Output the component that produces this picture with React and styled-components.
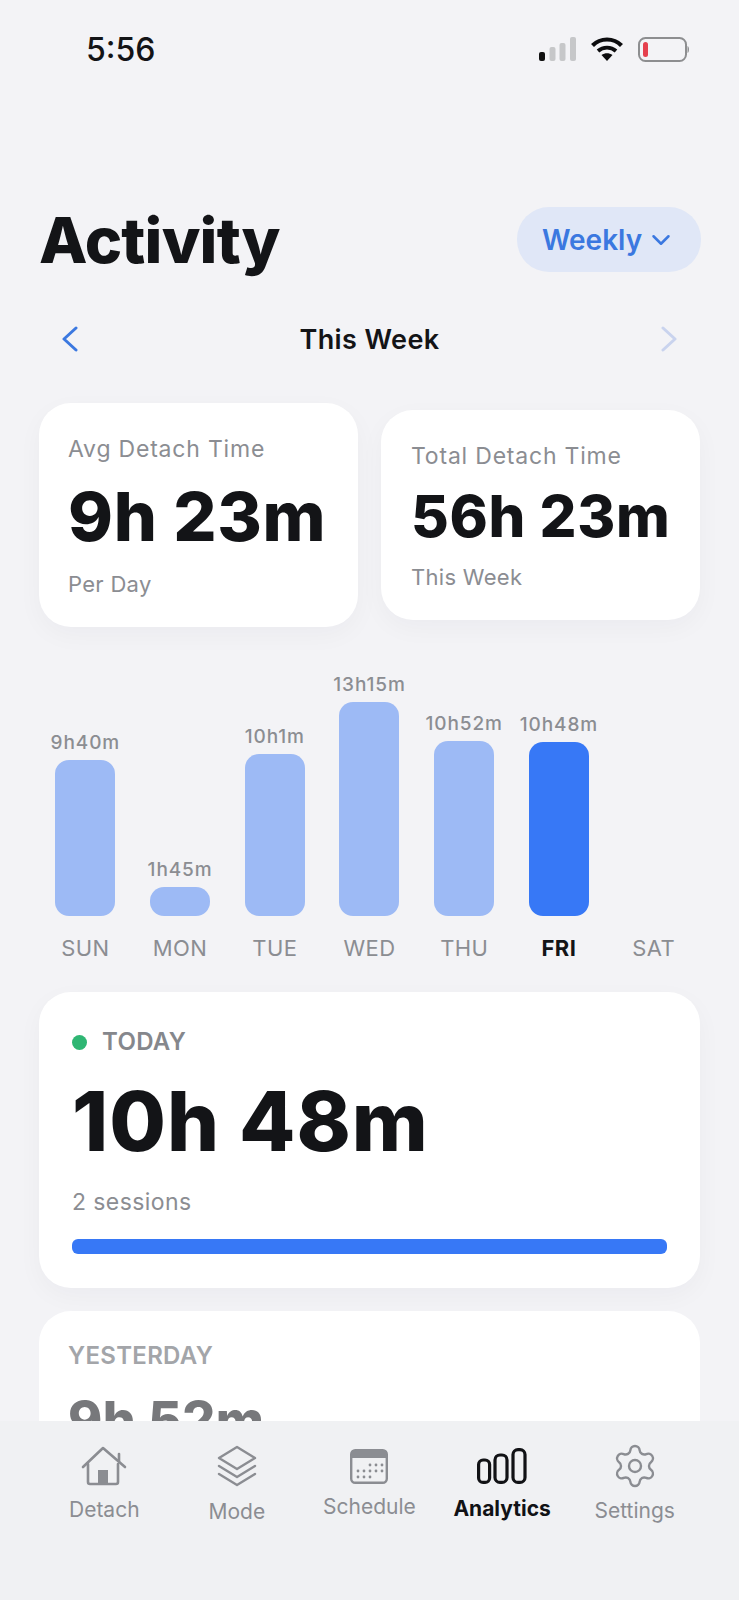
import React from "react";
import styled, { createGlobalStyle } from "styled-components";
import { ChevronDown, Settings } from "lucide-react";

const GlobalStyle = createGlobalStyle`
  * { box-sizing: border-box; }
  html, body { margin: 0; padding: 0; background: #f3f3f6; }
  body { font-family: Inter, "Noto Sans", "Liberation Sans", sans-serif; }
`;

const days = [
  { day: "SUN", label: "9h40m", height: 156 },
  { day: "MON", label: "1h45m", height: 29 },
  { day: "TUE", label: "10h1m", height: 162 },
  { day: "WED", label: "13h15m", height: 214 },
  { day: "THU", label: "10h52m", height: 175 },
  { day: "FRI", label: "10h48m", height: 174, active: true },
  { day: "SAT" },
];

const HomeIcon = () => (
  <svg width="46" height="40" viewBox="0 0 46 40" fill="none" stroke="#8b8d92" strokeWidth="2.6" strokeLinecap="round" strokeLinejoin="round">
    <path d="M2 21 L22 2 L44 21" />
    <path d="M38 15 V8" />
    <path d="M7 18 V36 a2 2 0 0 0 2 2 H35 a2 2 0 0 0 2 -2 V18" />
    <rect x="17" y="24" width="10" height="14" fill="#8b8d92" stroke="none" />
  </svg>
);

const LayersIcon = () => (
  <svg width="40" height="42" viewBox="0 0 40 42" fill="none" stroke="#8b8d92" strokeWidth="2.4" strokeLinejoin="round" strokeLinecap="round">
    <path d="M20 2 L38 13 L20 24 L2 13 Z" />
    <path d="M2 21 L20 32 L38 21" />
    <path d="M2 29 L20 40 L38 29" />
  </svg>
);

const CalendarIcon = () => {
  const dots = [];
  [16, 22, 28].forEach((y, row) => {
    [8, 14, 20, 26, 32].forEach((x, col) => {
      if ((row === 0 && col < 2) || (row === 2 && col > 2)) return;
      dots.push(<circle key={`${x}-${y}`} cx={x} cy={y} r="1.4" fill="#8b8d92" />);
    });
  });
  return (
    <svg width="38" height="35" viewBox="0 0 38 35" fill="none">
      <rect x="1.2" y="1.2" width="35.6" height="32.6" rx="4" stroke="#8b8d92" strokeWidth="2.4" />
      <path d="M1 5 a4 4 0 0 1 4 -4 H33 a4 4 0 0 1 4 4 V9 H1 Z" fill="#8b8d92" />
      {dots}
    </svg>
  );
};

const BarsIcon = () => (
  <svg width="50" height="36" viewBox="0 0 50 36" fill="none" stroke="#111215" strokeWidth="3.2">
    <rect x="1.6" y="12" width="11" height="22.4" rx="4.5" />
    <rect x="18" y="7" width="12" height="27.4" rx="5" />
    <rect x="36" y="1.6" width="12" height="32.8" rx="5" />
  </svg>
);

const NavChevron = ({ flip, color }) => (
  <svg width="18" height="26" viewBox="0 0 18 26" fill="none" stroke={color} strokeWidth="3" strokeLinecap="round" strokeLinejoin="round">
    <path d={flip ? "M3 2 L15 13 L3 24" : "M15 2 L3 13 L15 24"} />
  </svg>
);

const tabs = [
  { name: "Detach", icon: <HomeIcon />, gap: 11 },
  { name: "Mode", icon: <LayersIcon />, gap: 13 },
  { name: "Schedule", icon: <CalendarIcon />, gap: 8 },
  { name: "Analytics", icon: <BarsIcon />, gap: 10, active: true },
  { name: "Settings", icon: <Settings size={48} strokeWidth={1.2} color="#8b8d92" />, gap: 12 },
];

const StatusIcons = () => (
  <StatusGroup>
    <svg width="37" height="24" viewBox="0 0 37 24">
      <rect x="0" y="15" width="6" height="9" rx="2" fill="#111" />
      <rect x="10.5" y="10" width="6" height="14" rx="2" fill="#c6c7c9" />
      <rect x="20.5" y="6" width="6" height="18" rx="2" fill="#c6c7c9" />
      <rect x="31" y="0" width="6" height="24" rx="2" fill="#c6c7c9" />
    </svg>
    <svg width="32" height="24" viewBox="0 0 32 24" fill="none">
      <path d="M1.5 8.5 C9.5 0.5 22.5 0.5 30.5 8.5" stroke="#0c0c0e" strokeWidth="4.2" />
      <path d="M7 14 C12 9.5 20 9.5 25 14" stroke="#0c0c0e" strokeWidth="3.8" />
      <path d="M10.5 18 L16 24 L21.5 18 C18 15.5 14 15.5 10.5 18 Z" fill="#0c0c0e" />
    </svg>
    <svg width="52" height="25" viewBox="0 0 52 25" fill="none">
      <rect x="1" y="1" width="47" height="23" rx="6.5" stroke="#8d8e90" strokeWidth="2" />
      <rect x="5" y="5" width="5" height="15" rx="2.5" fill="#e5404e" />
      <path d="M49.5 9 C51.5 9.8 51.5 15.2 49.5 16 Z" fill="#8d8e90" />
    </svg>
  </StatusGroup>
);

export default function App() {
  return (
    <Screen>
      <GlobalStyle />
      <Body>
        <StatusBar>
          <Clock>5:56</Clock>
          <StatusIcons />
        </StatusBar>

        <TitleRow>
          <Title>Activity</Title>
          <RangeButton>
            Weekly
            <ChevronDown size={30} strokeWidth={2} />
          </RangeButton>
        </TitleRow>

        <WeekNav>
          <NavChevron color="#3b78e0" />
          <WeekName>This Week</WeekName>
          <NavChevron flip color="#c9d3ee" />
        </WeekNav>

        <SummaryRow>
          <SummaryCard $pad={17} $left={29}>
            <CardLabel>Avg Detach Time</CardLabel>
            <SummaryValue $size={68}>9h 23m</SummaryValue>
            <CardNote>Per Day</CardNote>
          </SummaryCard>
          <SummaryCard $pad={16} $left={30}>
            <CardLabel>Total Detach Time</CardLabel>
            <SummaryValue $size={58}>56h 23m</SummaryValue>
            <CardNote>This Week</CardNote>
          </SummaryCard>
        </SummaryRow>

        <Chart>
          {days.map((d) => (
            <DayColumn key={d.day}>
              {d.label && <BarValue>{d.label}</BarValue>}
              {d.height && <Bar $height={d.height} $active={d.active} />}
              <DayName $active={d.active}>{d.day}</DayName>
            </DayColumn>
          ))}
        </Chart>

        <TodayCard>
          <TodayHead>
            <GreenDot />
            <SectionLabel>TODAY</SectionLabel>
          </TodayHead>
          <TodayValue>10h 48m</TodayValue>
          <Sessions>2 sessions</Sessions>
          <Progress />
        </TodayCard>

        <YesterdayCard>
          <SectionLabel $muted>YESTERDAY</SectionLabel>
          <YesterdayValue>9h 52m</YesterdayValue>
        </YesterdayCard>
      </Body>

      <TabBar>
        {tabs.map((t) => (
          <Tab key={t.name}>
            <TabIcon>{t.icon}</TabIcon>
            <TabName $gap={t.gap} $active={t.active}>{t.name}</TabName>
          </Tab>
        ))}
      </TabBar>
    </Screen>
  );
}

const Screen = styled.div`
  width: 739px;
  height: 1600px;
  display: flex;
  flex-direction: column;
  overflow: hidden;
  background: #f3f3f6;
  color: #131417;
`;

const Body = styled.main`
  flex: 1;
  min-height: 0;
  overflow: hidden;
  padding: 0 39px;
`;

const StatusBar = styled.div`
  height: 70px;
  padding: 28px 10px 0 47px;
  display: flex;
  align-items: center;
  justify-content: space-between;
`;

const StatusGroup = styled.div`
  display: flex;
  align-items: center;
  gap: 15px;
`;

const Clock = styled.span`
  font-size: 32px;
  font-weight: 500;
`;

const TitleRow = styled.header`
  margin-top: 137px;
  height: 65px;
  display: flex;
  align-items: center;
  justify-content: space-between;
`;

const Title = styled.h1`
  margin: 0;
  font-size: 63px;
  font-weight: 800;
  letter-spacing: -0.8px;
`;

const RangeButton = styled.button`
  width: 184px;
  height: 65px;
  margin-right: -1px;
  border: 0;
  border-radius: 32px;
  background: #e0e7f7;
  color: #3b78e0;
  font-family: inherit;
  font-size: 28px;
  font-weight: 600;
  display: flex;
  align-items: center;
  justify-content: center;
  gap: 4px;
`;

const WeekNav = styled.nav`
  margin-top: 47px;
  height: 40px;
  padding: 0 22px 0 22px;
  display: flex;
  align-items: center;
  justify-content: space-between;
`;

const WeekName = styled.span`
  font-size: 27px;
  font-weight: 600;
  letter-spacing: 0.4px;
`;

const SummaryRow = styled.section`
  margin-top: 44px;
  display: flex;
  align-items: center;
  gap: 23px;
`;

const SummaryCard = styled.article`
  width: 319px;
  padding: 32px 0 29px ${(p) => p.$left}px;
  background: #fff;
  border-radius: 32px;
  box-shadow: 0 8px 26px rgba(30, 40, 70, 0.035);
  display: flex;
  flex-direction: column;
  gap: ${(p) => p.$pad}px;
`;

const CardLabel = styled.div`
  font-size: 23px;
  line-height: 28px;
  letter-spacing: 0.8px;
  color: #8b8d92;
`;

const CardNote = styled.div`
  font-size: 22px;
  line-height: 28px;
  letter-spacing: 0.3px;
  color: #8b8d92;
`;

const SummaryValue = styled.div`
  font-size: ${(p) => p.$size}px;
  line-height: ${(p) => (p.$size > 60 ? 72 : 60)}px;
  font-weight: 800;
  letter-spacing: 0.7px;
  white-space: nowrap;
  margin-bottom: 1px;
`;

const Chart = styled.section`
  margin: 40px -1px 0;
  height: 298px;
  display: grid;
  grid-template-columns: repeat(7, 1fr);
`;

const DayColumn = styled.div`
  display: flex;
  flex-direction: column;
  align-items: center;
  justify-content: flex-end;
`;

const BarValue = styled.span`
  margin-bottom: 7px;
  font-size: 19px;
  line-height: 20px;
  font-weight: 500;
  color: #8b8d92;
  letter-spacing: 0.9px;
  white-space: nowrap;
`;

const Bar = styled.div`
  width: 60px;
  height: ${(p) => p.$height}px;
  border-radius: 14px;
  background: ${(p) => (p.$active ? "#3778f6" : "#9dbaf5")};
`;

const DayName = styled.span`
  margin-top: 17px;
  height: 32px;
  font-size: 22px;
  line-height: 30px;
  letter-spacing: 0.4px;
  font-weight: ${(p) => (p.$active ? 700 : 400)};
  color: ${(p) => (p.$active ? "#131417" : "#8b8d92")};
`;

const TodayCard = styled.article`
  margin-top: 27px;
  padding: 35px 33px 34px;
  background: #fff;
  border-radius: 32px;
  box-shadow: 0 8px 26px rgba(30, 40, 70, 0.035);
`;

const TodayHead = styled.div`
  display: flex;
  align-items: center;
  gap: 15px;
`;

const GreenDot = styled.span`
  width: 15px;
  height: 15px;
  border-radius: 50%;
  background: #2fb673;
`;

const SectionLabel = styled.span`
  display: block;
  font-size: 24px;
  line-height: 30px;
  font-weight: 600;
  letter-spacing: 0.3px;
  color: ${(p) => (p.$muted ? "#a3a5a9" : "#85878c")};
`;

const TodayValue = styled.div`
  margin-top: 20px;
  font-size: 82px;
  line-height: 90px;
  font-weight: 800;
  letter-spacing: 1px;
`;

const Sessions = styled.div`
  margin-top: 21px;
  font-size: 23px;
  line-height: 28px;
  letter-spacing: 0.4px;
  color: #8b8d92;
`;

const Progress = styled.div`
  margin-top: 23px;
  height: 15px;
  border-radius: 6px;
  background: #3778f6;
`;

const YesterdayCard = styled.article`
  margin-top: 23px;
  padding: 30px 29px;
  background: #fff;
  border-radius: 32px;
`;

const YesterdayValue = styled.div`
  margin-top: 20px;
  font-size: 52px;
  line-height: 60px;
  font-weight: 800;
  letter-spacing: 0.4px;
  color: #77787b;
`;

const TabBar = styled.nav`
  flex: none;
  height: 179px;
  padding: 25px 38px 0;
  background: #f0f1f3;
  display: grid;
  grid-template-columns: repeat(5, 1fr);
  align-items: start;
  position: relative;
`;

const Tab = styled.div`
  display: flex;
  flex-direction: column;
  align-items: center;
`;

const TabIcon = styled.div`
  height: 40px;
  display: flex;
  align-items: center;
  justify-content: center;
`;

const TabName = styled.span`
  margin-top: ${(p) => p.$gap}px;
  font-size: 21px;
  line-height: 26px;
  font-weight: ${(p) => (p.$active ? 700 : 400)};
  color: ${(p) => (p.$active ? "#111215" : "#8b8d92")};
`;
